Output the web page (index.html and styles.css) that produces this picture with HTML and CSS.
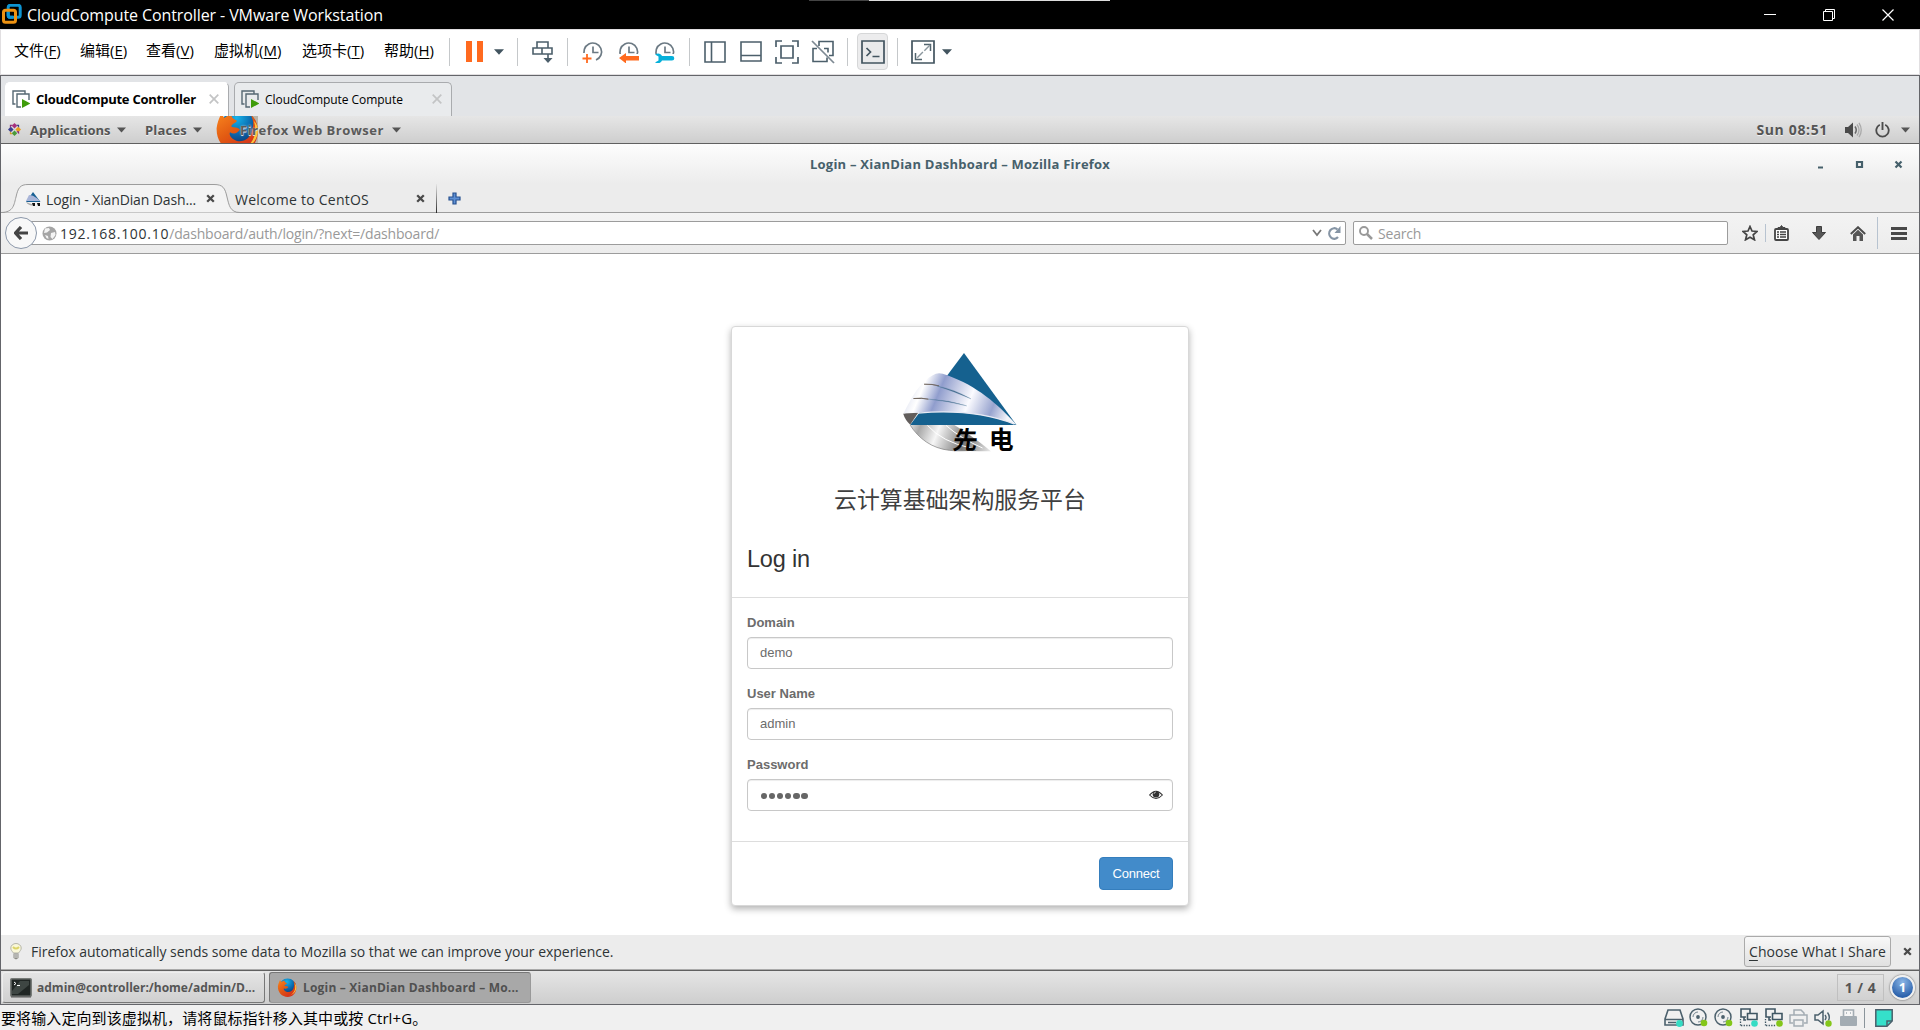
FILE: index.html
```html
<!DOCTYPE html>
<html lang="zh-CN">
<head>
<meta charset="utf-8">
<title>CloudCompute Controller - VMware Workstation</title>
<link rel="stylesheet" href="styles.css">
</head>
<body>
<svg class="defs" width="0" height="0" aria-hidden="true">
  <defs>
    <radialGradient id="foxGlobe" cx=".45" cy=".2" r=".8"><stop offset="0" stop-color="#16b4ea"/><stop offset=".55" stop-color="#0a62a8"/><stop offset="1" stop-color="#152b5c"/></radialGradient>
    <linearGradient id="foxFur" x1="0" y1="0" x2=".7" y2="1"><stop offset="0" stop-color="#f9871f"/><stop offset=".5" stop-color="#e25a12"/><stop offset="1" stop-color="#d42c1c"/></linearGradient>
    <symbol id="fox" viewBox="0 0 32 32">
      <circle cx="17" cy="15" r="13.5" fill="url(#foxGlobe)"/>
      <path d="M5 3c-1 3-3 6-3.600 11C1 24 8 31 17 31c8 0 14-6 14-15 0-5-2-9-5-11 2 4 2 7 1 10-1 6-6 9-11 8-4-1-6-4-5-6 3 2 6 0 7-2-2-2-5-1-6-2 0-2 3-2 4-4-2-1-4-2-4-4-2 0-4 1-5 2C6 6 5 5 5 3z" fill="url(#foxFur)"/>
      <path d="M28 9c3 8 0 17-9 20 7-1 12-7 12-13 0-3-1-5-3-7z" fill="#fcc43a"/>
    </symbol>
    <symbol id="vm" viewBox="0 0 18 18">
      <path d="M3.500 14H1V1h12v2.500M9 17H5V4h12v6" fill="none" stroke="#566873" stroke-width="1.400"/>
      <path d="M10 9l8.500 4.500L10 18z" fill="#3f9c0b"/>
    </symbol>
    <symbol id="x" viewBox="0 0 9 9"><path d="M1.200 1.200l6.600 6.600M7.800 1.200L1.200 7.800" fill="none" stroke="currentColor" stroke-width="2.300"/></symbol>
    <symbol id="thinx" viewBox="0 0 10 10"><path d="M.7.700l8.600 8.600M9.300.700L.7 9.300" fill="none" stroke="currentColor" stroke-width="1.700"/></symbol>
    <symbol id="caret" viewBox="0 0 10 6"><path d="M0 .3h10L5 5.700z" fill="currentColor"/></symbol>
    <symbol id="clock" viewBox="0 0 22 22"><path d="M3 15A8.800 8.800 0 1 1 14 19M11 5.500V11.500h5.500" fill="none" stroke="#6b7983" stroke-width="1.700"/></symbol>
    <symbol id="disc" viewBox="0 0 20 20"><circle cx="9" cy="9" r="8" fill="none" stroke="#4b606c" stroke-width="1.500"/><circle cx="9" cy="9" r="1.900" fill="#4b606c"/><path d="M9 4a5 5 0 0 0-5 5M14 9a5 5 0 0 1-5 5" fill="none" stroke="#74858f"/><circle cx="15" cy="15" r="3.300" fill="#84c61a"/></symbol>
    <symbol id="net" viewBox="0 0 20 20"><path d="M7 9H2V1h9v4M7 12H5V9M11 5.500h7v6H8.500v-6z" fill="none" stroke="#3f5663" stroke-width="1.600"/><path d="M1.500 11v7M2 17.500h10" fill="none" stroke="#3f5663" stroke-width="1.300" stroke-dasharray="1.300 1.300"/></symbol>
  </defs>
</svg>

<div class="workstation">
  <header class="titlebar">
    <svg class="vmlogo" viewBox="0 0 20 20"><rect x="6.200" y="1.300" width="12" height="12" rx="2" fill="none" stroke="#0d94d2" stroke-width="3"/><rect x="1.500" y="6.200" width="12" height="12" rx="2" fill="none" stroke="#ee9212" stroke-width="3"/><path d="M6.200 8v3.500a2 2 0 0 0 2 1.800H11" fill="none" stroke="#0d94d2" stroke-width="3"/></svg>
    <h1 class="apptitle">CloudCompute Controller - VMware Workstation</h1>
    <i class="topedge"></i>
    <div class="wincontrols">
      <svg width="12" height="14"><path d="M0 6.500h12" stroke="#fff"/></svg>
      <svg width="12" height="12"><path d="M.5 2.500h9v9h-9zM2.500 2.500v-2h9v9h-2" fill="none" stroke="#fff"/></svg>
      <svg width="12" height="12"><path d="M.5.500l11 11M11.500.500l-11 11" stroke="#fff" stroke-width="1.200"/></svg>
    </div>
  </header>

  <div class="menubar">
    <nav class="menus">
      <span class="m-file">文件(<u>F</u>)</span><span class="m-edit">编辑(<u>E</u>)</span><span class="m-view">查看(<u>V</u>)</span><span class="m-vm">虚拟机(<u>M</u>)</span><span class="m-tabs">选项卡(<u>T</u>)</span><span class="m-help">帮助(<u>H</u>)</span>
    </nav>
    <div class="tools">
      <div class="tool g-power">
        <svg width="17" height="21"><path d="M0 0h6v21H0zM11 0h6v21h-6z" fill="#ff6a1f"/></svg>
        <svg class="dark" width="10" height="6"><use href="#caret"/></svg>
      </div>
      <div class="tool g-send">
        <svg width="22" height="22"><path d="M5 1h11v6H5zM1 7h9v6H1zM10 7h10v6H10M16 13v6" fill="none" stroke="#4c5f6b" stroke-width="1.600"/><path d="M11.500 17h9L16 22z" fill="#4c5f6b"/></svg>
      </div>
      <div class="tool g-snap">
        <svg width="22" height="22"><use href="#clock"/><path d="M0 12h9v9H0z" fill="#fff"/><path d="M5 13v9M.5 17.500h9" stroke="#ff6a1f" stroke-width="1.800"/></svg>
        <svg width="22" height="22"><use href="#clock"/><path d="M0 13h22v10H0z" fill="#fff"/><path d="M1 17l7-5v3h13v4.500H8v3z" fill="#ff6a1f"/></svg>
        <svg width="22" height="22"><use href="#clock"/><path d="M0 13h22v10H0z" fill="#fff"/><path d="M1 13.500c3-2 6-1 7 1.500h10a2.300 2.300 0 0 1 0 4.600H8c-1 2.500-4 3.500-7 1.800l3.500-2v-4z" fill="#06b0da"/></svg>
      </div>
      <div class="tool g-view">
        <svg width="22" height="22"><path d="M1 1h20v20H1zM7.500 1v20" fill="none" stroke="#4c5f6b" stroke-width="1.600"/></svg>
        <svg width="22" height="22"><path d="M1 1h20v19H1zM1 14.500h20" fill="none" stroke="#4c5f6b" stroke-width="1.600"/></svg>
        <svg width="24" height="24"><path d="M1 7V1h6M17 1h6v6M23 17v6h-6M7 23H1v-6M6 6h12v12H6z" fill="none" stroke="#4c5f6b" stroke-width="1.700"/></svg>
        <svg width="24" height="24"><path d="M8 6V1.500h14v14h-4M14 21.500H2v-13h4M13 8.500h4v4M10 21.500h6v-4" fill="none" stroke="#4c5f6b" stroke-width="1.600"/><path d="M1 1l22 22" stroke="#7d8992" stroke-width="1.700"/></svg>
      </div>
      <div class="tool g-console">
        <span class="pressed"><svg width="24" height="24"><path d="M1 1h22v22H1z" fill="#e9eaeb" stroke="#42545f" stroke-width="1.700"/><path d="M5.500 8l4 4-4 4M11.500 16.500h7" fill="none" stroke="#42545f" stroke-width="1.700"/></svg></span>
      </div>
      <div class="tool g-full">
        <svg width="24" height="24"><path d="M1 1h22v22H1z" fill="#fff" stroke="#42545f" stroke-width="1.700"/><path d="M13 4.500h6.500V11M11 19.500H4.500V13" fill="none" stroke="#52646e" stroke-width="1.500"/><path d="M19 5L5 19" stroke="#8b979e" stroke-width="1.400" stroke-dasharray="8 2"/></svg>
        <svg class="dark" width="10" height="6"><use href="#caret"/></svg>
      </div>
    </div>
  </div>

  <section class="vmview">
    <div class="vmtabs">
      <div class="vmtab active"><svg width="18" height="18"><use href="#vm"/></svg><span>CloudCompute Controller</span><svg class="close" width="10" height="10"><use href="#thinx"/></svg></div>
      <div class="vmtab"><svg width="18" height="18"><use href="#vm"/></svg><span>CloudCompute Compute</span><svg class="close" width="10" height="10"><use href="#thinx"/></svg></div>
    </div>

    <div class="gnome">
      <svg class="centos" viewBox="0 0 14 14"><path d="M7 0l3 3-3 3-3-3z" fill="#a8307c"/><path d="M7 8l3 3-3 3-3-3z" fill="#4a9a3b"/><path d="M0 7l3-3 3 3-3 3z" fill="#3a3f91"/><path d="M8 7l3-3 3 3-3 3z" fill="#e89c1c"/><path d="M2 2h3l-3 3zM9 9l3 3V9z" fill="#8a2a75"/><path d="M12 2v3L9 2z" fill="#3b3a83"/><path d="M2 12V9l3 3z" fill="#d89b20"/></svg>
      <span class="g-app">Applications</span><svg width="9" height="6"><use href="#caret"/></svg>
      <span class="g-places">Places</span><svg width="9" height="6"><use href="#caret"/></svg>
      <div class="appmenu">
        <svg class="bigfox" viewBox="0 4 32 20" preserveAspectRatio="none"><rect x="22" y="4" width="10" height="20" fill="#b9b4a8"/><use href="#fox" x="-1" y="-3" width="34" height="36"/></svg>
        <span class="g-ff">Firefox Web Browser</span>
      </div>
      <svg width="9" height="6"><use href="#caret"/></svg>
      <span class="clocktext">Sun 08:51</span>
      <svg class="vol" width="17" height="16"><path d="M0 5h3l5-4.500v15L3 11H0z" fill="#4a4a4a"/><path d="M10 4.500q2.500 3.500 0 7" fill="none" stroke="#666" stroke-width="1.500"/><path d="M12 2.500q4 5.500 0 11M14 .8q4.500 7.200 0 14.400" fill="none" stroke="#aaa" stroke-width="1.300"/></svg>
      <svg class="pow" width="15" height="16"><path d="M4.800 2.800a6.200 6.200 0 1 0 5.400 0" fill="none" stroke="#4c4c4c" stroke-width="1.800"/><path d="M7.500 0v8" stroke="#4c4c4c" stroke-width="1.900"/></svg>
      <svg class="endcaret" width="9" height="6"><use href="#caret"/></svg>
    </div>

    <div class="fftitle">
      <span>Login – XianDian Dashboard – Mozilla Firefox</span>
      <div class="ffcontrols">
        <svg width="9" height="9"><path d="M2 7.500h5" stroke="#46606b" stroke-width="2"/></svg>
        <svg width="9" height="9"><path d="M2 2h5v5H2z" fill="none" stroke="#46606b" stroke-width="2.200"/></svg>
        <svg width="9" height="9"><path d="M1.500 1.500l6 6M7.500 1.500l-6 6" stroke="#46606b" stroke-width="2.200"/></svg>
      </div>
    </div>

    <div class="fftabs">
      <div class="fftab current">
        <svg class="tabshape" viewBox="0 0 240 29"><path d="M0 28.500C13 28.500 13 20 15 13 17 4 19 .5 27 .5H213C222 .5 224 4 226 13c2 8 3 15.500 13 15.500z" fill="#f3f3f3"/><path d="M0 28.500C13 28.500 13 20 15 13 17 4 19 .5 27 .5H213C222 .5 224 4 226 13c2 8 3 15.500 13 15.500" fill="none" stroke="#9c9c9c"/></svg>
        <svg class="favicon" viewBox="0 0 16 16"><path d="M8 1l7.500 10H1z" fill="#165f92"/><path d="M4 4c4 0 8 3 11 6H1z" fill="#a9b5d8"/><path d="M1 11c2 3 5 4 8 3z" fill="#aaa"/><path d="M7 12h3v3H8M12 12h3v3h-2z" fill="#111"/></svg>
        <span>Login - XianDian Dash...</span>
        <svg class="close" width="9" height="9"><use href="#x"/></svg>
      </div>
      <div class="fftab second"><span>Welcome to CentOS</span><svg class="close" width="9" height="9"><use href="#x"/></svg></div>
      <svg class="plus" width="13" height="13"><path d="M5 1h3v4h4v3H8v4H5V8H1V5h4z" fill="#5e90d4" stroke="#26508f" stroke-width="1.200"/></svg>
    </div>

    <div class="ffnav">
      <div class="back"><svg width="14" height="14"><path d="M7 1L1.500 7 7 13M2 7h12" fill="none" stroke="#444" stroke-width="3.200"/></svg></div>
      <div class="urlbar">
        <svg class="globe" width="15" height="15"><circle cx="7.500" cy="7.500" r="7" fill="#a5a5a5"/><path d="M3 2.500l4-.5 1 2-3 2.500-3 .5zM9 7l4-1 .5 3-3 4-2-2zM3 9l3 1 .5 3-2-1z" fill="#f4f4f4"/></svg>
        <span class="host">192.168.100.10</span><span class="path">/dashboard/auth/login/?next=/dashboard/</span>
        <svg class="drop" width="10" height="8"><path d="M1 1l4 5 4-5" fill="none" stroke="#777" stroke-width="1.800"/></svg>
        <svg width="13" height="14"><path d="M10 11A5 5.300 0 1 1 9.500 3.500" fill="none" stroke="#8695a5" stroke-width="2.200"/><path d="M12.500 0v7H6.500z" fill="#8695a5"/></svg>
      </div>
      <div class="search"><svg width="14" height="14"><circle cx="5" cy="5" r="4" fill="none" stroke="#999" stroke-width="1.900"/><path d="M8 8l5 5" stroke="#999" stroke-width="2.500"/></svg><span>Search</span></div>
      <div class="ffactions">
        <svg width="16" height="16"><path d="M8 1.500l2 4.500 5 .5-3.800 3.300 1.300 5L8 12.200l-4.500 2.600 1.300-5L1 6.500 6 6z" fill="none" stroke="#444" stroke-width="1.700"/></svg>
        <i class="vsep short"></i>
        <svg width="15" height="16"><rect x="1" y="4" width="13" height="11" rx="1" fill="#fff" stroke="#444" stroke-width="1.800"/><path d="M4 3.500V2.500h2L7.500.500 9 2.500h2v1z" fill="#444" stroke="#444"/><path d="M3 7h2M3 9.500h2M3 12h2M6 7h6M6 9.500h6M6 12h6" stroke="#444" stroke-width="1.300"/></svg>
        <svg class="dl" width="14" height="14"><path d="M4.500.500h5v6h4L7 13.500.500 6.500h4z" fill="#565656" stroke="#3d3d3d"/></svg>
        <svg class="home" width="16" height="15"><path d="M.8 8L8 1.200 15.200 8" fill="none" stroke="#4a4a4a" stroke-width="1.900"/><path d="M3 8.500l5-4.700 5 4.700V15H9.500v-5h-3v5H3z" fill="#555"/></svg>
        <i class="vsep tall"></i>
        <svg width="16" height="13"><path d="M0 1.500h16M0 6.500h16M0 11.500h16" stroke="#484848" stroke-width="2.800"/></svg>
      </div>
    </div>

    <main class="page">
      <form class="card" onsubmit="return false">
        <div class="brand">
          <svg class="logo" viewBox="39 38 342 304">
            <defs>
              <linearGradient id="wing" x1="60" y1="120" x2="350" y2="240" gradientUnits="userSpaceOnUse"><stop offset="0" stop-color="#dde1f0"/><stop offset=".14" stop-color="#fff"/><stop offset=".3" stop-color="#909dcd"/><stop offset=".43" stop-color="#bfc6e2"/><stop offset=".6" stop-color="#fbfbff"/><stop offset=".83" stop-color="#98a4cf"/><stop offset="1" stop-color="#f4f5fa"/></linearGradient>
              <linearGradient id="under" x1="50" y1="230" x2="300" y2="330" gradientUnits="userSpaceOnUse"><stop offset="0" stop-color="#fff"/><stop offset=".18" stop-color="#a8a8a8"/><stop offset=".38" stop-color="#f6f6f6"/><stop offset=".7" stop-color="#777"/><stop offset="1" stop-color="#e5e5e5"/></linearGradient>
            </defs>
            <path d="M222 38L380 255H60z" fill="#15618f"/>
            <path d="M60 255C85 295 125 325 178 331c40 3 80 3 125 3-25-22-65-50-110-79z" fill="url(#under)"/>
            <path d="M60 255C85 295 125 325 178 331c30 3 60 0 80 0" fill="none" stroke="#777" stroke-width="2"/>
            <path d="M112 256q45 50 130 68M168 256q45 40 110 68" fill="none" stroke="#fff" stroke-width="3"/>
            <path d="M39 221q22-7 45-3L60 254q-15-14-21-33z" fill="#625e5c"/>
            <path d="M40 220C65 170 90 125 128 105c12-8 23-9 44 0 90 33 150 85 208 149-90-35-180-46-340-34z" fill="url(#wing)"/>
            <path d="M102 132q25-1 45 5-20-6-45-5zM70 175q25-3 45 2-20-4-45-2z" fill="#444" stroke="#665b52" stroke-width="2"/>
            <path d="M140 137q50 9 103 39-55-24-103-39zM116 177q60 2 114 20-60-15-114-20z" fill="#426b8e" stroke="#51789a" stroke-width=".8"/>
            <path d="M84 219q165-15 290 33" fill="none" stroke="#e8eaf4" stroke-width="4"/>
            <g class="brush"><text x="187" y="328" transform="skewX(-8) translate(45 0)">先</text><text x="297" y="326">电</text></g>
          </svg>
          <p class="platform">云计算基础架构服务平台</p>
          <h2 class="heading">Log in</h2>
        </div>
        <div class="fields">
          <label>Domain</label><div class="input">demo</div>
          <label>User Name</label><div class="input">admin</div>
          <label>Password</label>
          <div class="input"><span class="dots"><i></i><i></i><i></i><i></i><i></i><i></i></span>
            <svg class="eye" width="14" height="10"><path d="M.6 5Q7-2.500 13.400 5 7 12 .6 5z" fill="#fff" stroke="#333" stroke-width="1.100"/><circle cx="7" cy="4.300" r="3.300" fill="#333"/><path d="M5 4q0-2 2-2" fill="none" stroke="#ccc" stroke-width=".8"/></svg>
          </div>
        </div>
        <div class="actions"><button class="connect">Connect</button></div>
      </form>
    </main>

    <div class="notice">
      <svg class="bulb" width="12" height="17"><path d="M3.500 10C2 8 .8 7 .8 5a5.200 4.500 0 0 1 10.400 0c0 2-1.200 3-2.700 5z" fill="#faf8d8" stroke="#b5b5a8"/><path d="M3 4q3 3 6 0" fill="none" stroke="#dcd468" stroke-width="2"/><path d="M3.500 10.500h5v4.500L6 16.500 3.500 15z" fill="#8d8d85"/><path d="M4 12h4M4 14h4" stroke="#ddd"/></svg>
      <span class="msg">Firefox automatically sends some data to Mozilla so that we can improve your experience.</span>
      <button class="share"><u>C</u>hoose What I Share</button>
      <svg class="close" width="9" height="9"><use href="#x"/></svg>
    </div>

    <div class="taskbar">
      <div class="task t1"><svg width="22" height="20"><rect x=".8" y=".8" width="20.400" height="17.400" rx="1" fill="#202624" stroke="#777b78" stroke-width="1.600"/><path d="M2 13l8-10h9v4L8 16H2z" fill="#3e4643"/><path d="M4 4l2 1.500L4 7M7 7.500h3" fill="none" stroke="#fff"/><path d="M1 19h20" stroke="#555"/></svg><span>admin@controller:/home/admin/D...</span></div>
      <div class="task t2"><svg width="20" height="21"><use href="#fox"/></svg><span>Login – XianDian Dashboard – Mo...</span></div>
      <div class="pager">1 / 4</div>
      <div class="bubble">1</div>
    </div>
  </section>

  <footer class="status">
    <span class="hint">要将输入定向到该虚拟机，请将鼠标指针移入其中或按 Ctrl+G。</span>
    <div class="devices">
      <svg width="20" height="20"><path d="M4 2h12l3 9v6H1v-6zM1.500 11.500h17M4 14.500h8" fill="none" stroke="#4b606c" stroke-width="1.600"/><circle cx="15.500" cy="15.500" r="3.400" fill="#35dcc4"/></svg>
      <svg width="20" height="20"><use href="#disc"/></svg>
      <svg width="20" height="20"><use href="#disc"/></svg>
      <svg width="20" height="20"><use href="#net"/><circle cx="15.500" cy="15.500" r="3.300" fill="#35dcc4"/></svg>
      <svg width="20" height="20"><use href="#net"/><circle cx="15.500" cy="15.500" r="3.300" fill="#84c61a"/></svg>
      <svg width="20" height="20"><path d="M5 7V2h7l3 3v2M4 15H1V7h17v8h-3M5 12h9v6H5z" fill="none" stroke="#a3acb3" stroke-width="1.500"/></svg>
      <svg width="20" height="20"><path d="M1 7h3l5-4v13l-5-4H1z" fill="none" stroke="#4b606c" stroke-width="1.500"/><path d="M11 7q2 2.500 0 5M13.500 4.500q3 4 1 8" fill="none" stroke="#4b606c" stroke-width="1.400"/><circle cx="14.500" cy="15.500" r="3.200" fill="#84c61a"/></svg>
      <svg width="20" height="20"><path d="M4.500 8V2h10v6" fill="#f6f6f6" stroke="#a3acb3" stroke-width="1.600"/><path d="M7 5h1M11 5h1" stroke="#a3acb3" stroke-width="1.500"/><rect x="1" y="8" width="17" height="10" rx="1" fill="#a3acb3"/></svg>
      <i class="devsep"></i>
      <svg width="18" height="18"><path d="M.8.800h16.400V12L12 17.200H.8z" fill="#35e0ca" stroke="#4b606c" stroke-width="1.500"/><path d="M17 12h-5v5" fill="none" stroke="#4b606c" stroke-width="1.500"/></svg>
    </div>
  </footer>
</div>
</body>
</html>
```
FILE: styles.css
```css
* { box-sizing: border-box; }
body { margin: 0; background: #fff; font-family: "Open Sans", "Noto Sans CJK SC", sans-serif; }
.defs { position: absolute; }
svg { display: block; flex: none; }
span { white-space: nowrap; }
h1, h2, p { margin: 0; font-weight: 400; }
.workstation { width: 1920px; height: 1030px; display: flex; flex-direction: column; overflow: hidden; }

/* Host window */
.titlebar { height: 29px; flex: none; background: #000; color: #fff; display: flex; align-items: center; padding-left: 2px; }
.vmlogo { width: 20px; height: 20px; margin-top: -1px; }
.apptitle { width: 782px; margin-left: 5px; font-size: 16px; line-height: 28px; letter-spacing: -.1px; }
.topedge { align-self: flex-start; width: 301px; height: 1px; background: linear-gradient(90deg, #444 60px, #ddd 60px); }
.wincontrols { display: flex; align-items: center; gap: 47px; margin-left: auto; padding-right: 26px; }

.menubar { height: 46px; flex: none; display: flex; border: solid #e1dfe1; border-width: 1px 1px 1px 1px; }
.menus { display: flex; width: 448px; padding-left: 13px; font: 15px/41px "Open Sans", "Noto Sans CJK SC", sans-serif; color: #000; }
.menus u { text-underline-offset: 2px; }
.m-file, .m-edit { width: 66px; }
.m-view { width: 68px; }
.m-vm { width: 88px; }
.m-tabs { width: 82px; }
.tools { display: flex; align-items: center; padding-bottom: 1px; }
.tool { display: flex; align-items: center; height: 28px; border-left: 1px solid #c5c8ca; }
.g-power { width: 68px; padding-left: 16px; gap: 11px; }
.g-send { width: 50px; padding-left: 14px; }
.g-snap { width: 122px; padding-left: 14px; gap: 14px; }
.g-view { width: 158px; padding-left: 14px; gap: 14px; }
.g-view svg:nth-child(3) { margin-right: -2px; margin-left: -1px; }
.g-console { width: 50px; padding-left: 9px; }
.pressed { width: 31px; height: 37px; display: flex; align-items: center; justify-content: center; background: #ececed; border: 1px solid #d6d7d8; border-radius: 4px; flex: none; }
.g-full { padding-left: 13px; gap: 7px; }
.dark { color: #42545f; }

.vmview { flex: none; height: 930px; display: flex; flex-direction: column; border: 1px solid #64656a; background: #fff; }
.vmtabs { height: 40px; flex: none; display: flex; gap: 5px; padding: 6px 0 0 4px; background: #e2e4e7; }
.vmtab { display: flex; align-items: center; width: 218px; height: 34px; padding: 0 9px 1px 6px; border: 1px solid #a9abae; border-bottom: 0; border-radius: 5px 5px 0 0; background: #e9ebed; font-size: 12px; letter-spacing: -.05px; color: #000; }
.vmtab.active { width: 224px; border-color: #fff #a9abae #fff #fff; background: #fff; font-size: 13px; font-weight: 700; letter-spacing: -.25px; }
.vmtab span { margin-left: 6px; }
.vmtab .close { margin-left: auto; color: #c3c4c5; }

/* Guest desktop: top panel */
.gnome { height: 28px; flex: none; display: flex; align-items: center; padding-left: 7px; background: linear-gradient(#e6e6e6, #cecece); border-bottom: 1px solid #606060; color: #555; font-size: 13px; font-weight: 700; }
.gnome span { text-shadow: 0 1px #f0f0f0; }
.centos { width: 13px; height: 13px; margin-right: 9px; }
.g-app { width: 87px; }
.g-places { width: 48px; margin-left: 19px; letter-spacing: .2px; }
.appmenu { display: flex; align-items: center; width: 176px; height: 27px; margin-left: 14px; }
.bigfox { width: 42px; height: 27px; }
.appmenu .g-ff { position: relative; z-index: 1; margin-left: -18px; letter-spacing: .5px; color: #5a5a5a; text-shadow: 0 0 2px #ddd, 0 1px #ddd; }
.clocktext { margin-left: auto; font-size: 14px; letter-spacing: .65px; }
.vol { margin-left: 17px; }
.pow { margin-left: 13px; }
.endcaret { margin: 0 9px 0 11px; }

/* Guest browser */
.fftitle { height: 40px; flex: none; display: flex; align-items: center; padding-left: 809px; background: linear-gradient(#fdfdfd, #ececec); color: #46606b; font-size: 13px; font-weight: 700; letter-spacing: .23px; }
.ffcontrols { display: flex; gap: 30px; margin-left: auto; padding-right: 16px; }
.fftabs { height: 29px; flex: none; display: flex; background: linear-gradient(#9c9c9c, #9c9c9c) bottom / 100% 1px no-repeat #ececec; color: #2e3436; font-size: 14px; }
.fftab { display: flex; align-items: center; position: relative; }
.fftab span { position: relative; padding-top: 2px; }
.current { width: 234px; padding-left: 24px; letter-spacing: -.13px; }
.tabshape { position: absolute; left: 0; top: 0; width: 240px; height: 29px; }
.favicon { position: relative; width: 16px; height: 16px; }
.current span { width: 160px; margin-left: 5px; }
.fftab .close, .notice .close { position: relative; color: #4a4a4a; }
.second { width: 202px; letter-spacing: .25px; border-right: 1px solid #333; border-image: linear-gradient(#ececec, #222) 1; border-width: 0 1px 0 0; }
.second span { width: 181px; }
.plus { margin: 8px 0 0 11px; }

.ffnav { height: 41px; flex: none; display: flex; align-items: center; padding: 0 13px 0 4px; background: linear-gradient(#f3f3f3, #ececec); border-bottom: 1px solid #9c9c9c; }
.back { position: relative; z-index: 1; width: 32px; height: 32px; margin-right: -16px; display: flex; align-items: center; justify-content: center; border: 1px solid #8c98aa; border-radius: 50%; background: #f8f8f8; flex: none; }
.urlbar, .search { height: 24px; display: flex; align-items: center; background: #fff; border: 1px solid #9c9c9c; border-radius: 2px; font-size: 14px; line-height: 22px; }
.urlbar span, .search span { padding-top: 2px; }
.urlbar { width: 1325px; flex: none; padding: 0 4px 0 20px; }
.globe { margin-right: 3px; }
.host { letter-spacing: .72px; color: #2e3436; }
.path { letter-spacing: -.17px; color: #999; }
.drop { margin: 0 6px 0 auto; }
.search { width: 375px; flex: none; margin-left: 7px; padding-left: 5px; color: #999; }
.search span { margin-left: 5px; letter-spacing: -.2px; }
.ffactions { display: flex; align-items: center; margin-left: 14px; flex: 1; }
.vsep { width: 1px; background: #b7c3d0; }
.short { height: 18px; margin: 0 8px 0 7px; }
.tall { height: 32px; margin: 0 13px 0 11px; }
.dl { margin-left: 23px; }
.home { margin-left: 24px; }

.page { height: 681px; flex: none; padding-top: 72px; }
.card { width: 458px; height: 580px; margin: 0 auto; display: flex; flex-direction: column; border: 1px solid #d8d8d8; border-radius: 4px; background: #fff; box-shadow: 0 3px 7px rgba(0,0,0,.3); font-family: "Liberation Sans", "Noto Sans CJK SC", sans-serif; }
.brand { height: 271px; flex: none; border-bottom: 1px solid #ddd; padding: 26px 15px 0; }
.logo { width: 114px; height: 101px; margin: 0 auto; overflow: visible; }
.brush { font: 700 74px "Noto Sans CJK SC", sans-serif; }
.platform { margin-top: 26px; text-align: center; color: #404040; font: 400 22.900px/36px "Noto Sans CJK SC", sans-serif; }
.heading { margin-top: 27px; font-size: 23.500px; line-height: 32px; letter-spacing: -.2px; color: #333; }
.fields { height: 244px; flex: none; padding: 17px 15px 0; border-bottom: 1px solid #ddd; }
.fields label { display: block; height: 22px; font-size: 13px; font-weight: 700; line-height: 16px; color: #6c6c6c; }
.input { display: flex; align-items: center; height: 32px; margin-bottom: 17px; padding: 0 9px 1px 12px; border: 1px solid #c8c8c8; border-radius: 4px; box-shadow: inset 0 1px 1px rgba(0,0,0,.075); color: #6c6c6c; font-size: 13px; }
.dots { display: flex; gap: 1.900px; margin: 3px 0 0 1px; }
.dots i { width: 6.200px; height: 6.200px; border-radius: 50%; background: #666; }
.eye { margin-left: auto; }
.actions { display: flex; justify-content: flex-end; padding: 15px; }
.connect { width: 74px; height: 33px; padding: 0; border: 1px solid #357ebd; border-radius: 4px; background: #428bca; color: #fff; font: 13px "Liberation Sans", sans-serif; letter-spacing: -.2px; }

.notice { height: 35px; flex: none; display: flex; align-items: center; padding: 0 7px 1px 9px; background: #ececec; border-bottom: 1px solid #aaa; color: #2e3436; font-size: 14px; }
.msg { margin-left: 9px; letter-spacing: -.03px; }
.share { width: 147px; height: 31px; margin: 0 12px 0 auto; padding: 0; border: 1px solid #aaa; border-radius: 3px; background: linear-gradient(#f8f8f8, #e0e0e0); color: #2e3436; font: 14px "Open Sans", sans-serif; letter-spacing: .08px; }
.share u { text-underline-offset: 3px; }

.taskbar { height: 34px; flex: none; display: flex; align-items: center; padding: 0 4px 0 1px; background: linear-gradient(#e5e5e5, #cecece); border-top: 1px solid #606060; color: #555; font-size: 12px; font-weight: 700; }
.task { display: flex; align-items: center; width: 263px; height: 31px; border: 1px solid #888; border-radius: 3px; }
.t1 { padding-left: 7px; border-color: #eee #777 #777 #eee; }
.t1 span { margin-left: 5px; }
.t2 { width: 262px; margin-left: 4px; padding-left: 7px; background: #a8a8a8; border-color: #777 #999 #999 #777; color: #505050; }
.t2 span { margin-left: 6px; letter-spacing: .2px; }
.pager { width: 47px; height: 27px; margin-left: auto; border: 1px solid #c0c0c0; text-align: center; font-size: 14px; line-height: 25px; letter-spacing: .5px; }
.bubble { width: 25px; height: 25px; margin-left: 6px; border: 2px solid #f0f0f0; border-radius: 50%; background: radial-gradient(circle at 50% 25%, #8bb6e6, #2c62ac 75%); box-shadow: 0 0 2px #444; color: #fff; text-align: center; font-size: 13px; line-height: 20px; }

.status { flex: 1; display: flex; align-items: center; background: #f0f0f0; }
.hint { margin-left: 1px; font: 15px/24px "Open Sans", "Noto Sans CJK SC", sans-serif; letter-spacing: .1px; color: #000; }
.devices { display: flex; align-items: center; gap: 5px; margin-left: auto; padding-right: 27px; }
.devsep { width: 1px; height: 20px; margin: 0 5px 0 0; background: #8a949b; }
```
